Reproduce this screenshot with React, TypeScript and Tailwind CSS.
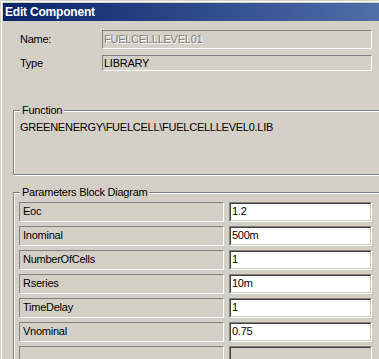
import React from 'react';

type Param = { name: string; value: string };

const params: Param[] = [
    { name: 'Eoc', value: '1.2' },
    { name: 'Inominal', value: '500m' },
    { name: 'NumberOfCells', value: '1' },
    { name: 'Rseries', value: '10m' },
    { name: 'TimeDelay', value: '1' },
    { name: 'Vnominal', value: '0.75' },
    { name: '', value: '' },
];

function GroupBox({ label, className, children }: { label: string; className?: string; children: React.ReactNode }) {
    return (
        <div
            className={`relative ml-[9px] w-[372px] border border-[#808080] shadow-[inset_1px_1px_0_#ffffff,1px_1px_0_#ffffff] ${className ?? ''}`}
        >
            <span className="absolute left-[6px] top-[-8px] bg-[#d4d0c8] px-[2px] leading-[14px]">{label}</span>
            {children}
        </div>
    );
}

function ParamRow({ p }: { p: Param }) {
    const empty = p.name === '' && p.value === '';
    return (
        <div className="flex h-[20px] gap-[5px]">
            <div className="flex w-[205px] items-center border border-t-[#808080] border-l-[#808080] border-r-white border-b-white pl-[3px]">
                {p.name}
            </div>
            <div className="w-[143px] border border-t-[#808080] border-l-[#808080] border-r-white border-b-white">
                <div
                    className={`flex h-full items-center border border-t-[#404040] border-l-[#404040] border-r-[#d4d0c8] border-b-[#d4d0c8] pl-px ${
                        empty ? 'bg-[#d4d0c8]' : 'bg-white'
                    }`}
                >
                    {p.value}
                </div>
            </div>
        </div>
    );
}

export default function App() {
    return (
        <div className="h-[359px] w-[379px] overflow-hidden bg-[#d4d0c8] pl-px pt-px font-['Liberation_Sans',Arial,sans-serif] text-[11px] tracking-[-0.25px] text-black">
            <div className="h-full border-l border-t border-white pl-px pt-px">
                <div className="flex h-[18px] items-center bg-gradient-to-r from-[#0a246a] to-[#4f6fa8] pl-[2px] text-[12px] font-bold tracking-[-0.2px] text-white">
                    Edit Component
                </div>

                <div className="h-full pl-[1px]">
                    <div className="ml-[16px] mt-[9px] flex items-center">
                        <span className="w-[82px]">Name:</span>
                        <div className="flex h-[19px] w-[270px] items-center border border-t-[#808080] border-l-[#808080] border-r-white border-b-white pl-[1px] text-[#808080] [text-shadow:1px_1px_0_#ffffff]">
                            FUELCELLLEVEL01
                        </div>
                    </div>
                    <div className="ml-[16px] mt-[6px] flex items-center">
                        <span className="w-[82px]">Type</span>
                        <div className="flex h-[16px] w-[270px] items-center border border-t-[#808080] border-l-[#808080] border-r-white border-b-white pl-[1px]">
                            LIBRARY
                        </div>
                    </div>

                    <GroupBox label="Function" className="mt-[38px] h-[65px]">
                        <div className="pl-[6px] pt-[8px]">GREENENERGY\FUELCELL\FUELCELLLEVEL0.LIB</div>
                    </GroupBox>

                    <GroupBox label="Parameters Block Diagram" className="mt-[17px] h-[200px]">
                        <div className="flex flex-col gap-[4px] pl-[5px] pt-[9px]">
                            {params.map((p, i) => (
                                <ParamRow key={i} p={p} />
                            ))}
                        </div>
                    </GroupBox>
                </div>
            </div>
        </div>
    );
}
